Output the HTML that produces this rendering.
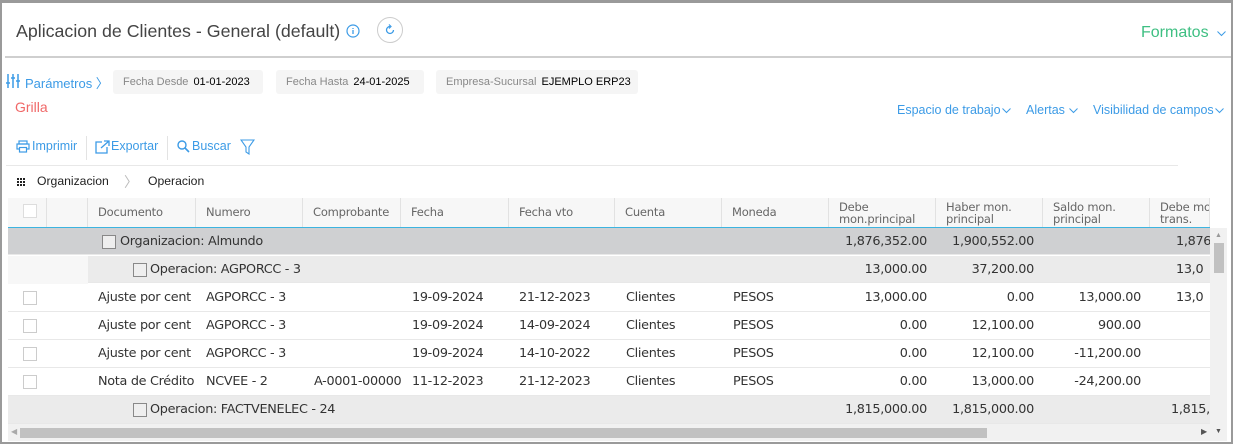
<!DOCTYPE html>
<html><head><meta charset="utf-8"><style>
*{box-sizing:border-box;margin:0;padding:0}
body{width:1235px;height:448px;background:#fff;font-family:"Liberation Sans",sans-serif;position:relative;overflow:hidden}
.a{position:absolute;white-space:nowrap}
.blue{color:#3c9be6}
.frame{position:absolute;left:0;top:0;width:1233px;height:444px;border:2px solid #9a9a9a;border-top-width:3px}
.pill{position:absolute;top:70px;height:24px;background:#f5f5f5;border-radius:3px;font-size:11px;line-height:24px;padding-left:10px}
.pill span{color:#888;margin-right:5px}
.g{font-family:"DejaVu Sans",sans-serif;font-size:12.8px;color:#333;letter-spacing:-0.3px}
.hd{position:absolute;top:198px;height:30px;background:#f7f7f7;border-right:1px solid #e2e2e2;font-family:"DejaVu Sans",sans-serif;font-size:11.5px;color:#666;padding:6px 0 0 10px;line-height:12px;letter-spacing:-0.2px;overflow:hidden;white-space:nowrap}
.row{position:absolute;left:8px;width:1202px;height:28px;border-bottom:1px solid #e8e8e8}
.cb{position:absolute;width:14px;height:14px;border:1px solid #ccc;background:#fff}
.cbg{position:absolute;width:14px;height:14px;border:1px solid #888;background:#eee}
.c{position:absolute;line-height:28px;overflow:hidden;white-space:nowrap}
.r{text-align:right}
.dd{position:absolute;top:103px;font-size:12.5px;color:#3c9be6}
</style></head><body>
<div class="frame"></div>
<div class="a" style="left:16px;top:21px;font-size:17.8px;color:#444">Aplicacion de Clientes - General (default)</div>
<svg class="a" style="left:346px;top:24px" width="14" height="14" viewBox="0 0 14 14"><circle cx="7" cy="7" r="6" fill="none" stroke="#3c9be6" stroke-width="1.2"/><path d="M7 6v4M7 4v1" stroke="#3c9be6" stroke-width="1.3"/></svg>
<div class="a" style="left:377px;top:17px;width:26px;height:26px;border:1px solid #ccc;border-radius:50%"></div>
<svg class="a" style="left:384px;top:24px" width="12" height="12" viewBox="0 0 12 12"><path d="M9.5 6A3.5 3.5 0 1 1 6 2.5" fill="none" stroke="#3c9be6" stroke-width="1.3"/><path d="M5 0.5L7 2.5 5 4.5" fill="none" stroke="#3c9be6" stroke-width="1.2"/></svg>
<div class="a" style="left:1141px;top:24px;font-size:16px;color:#3ebf82">Formatos</div>
<svg class="a" style="left:1217px;top:31px" width="9" height="6" viewBox="0 0 9 6"><path d="M0.5 0.5L4.5 4.5 8.5 0.5" fill="none" stroke="#3c9be6"/></svg>
<div class="a" style="left:5px;top:56px;width:1226px;height:2px;background:#cfcfcf"></div>
<svg class="a" style="left:6px;top:73px" width="14" height="16" viewBox="0 0 14 16"><path d="M2 1v14M7 1v14M12 1v14" stroke="#3c9be6" stroke-width="1.5"/><path d="M0 10h4M5 5h4M10 8h4" stroke="#3c9be6" stroke-width="1.5"/></svg>
<div class="a blue" style="left:25px;top:73px;font-size:13px">Parámetros 〉</div>
<div class="pill" style="left:113px;width:150px"><span>Fecha Desde</span>01-01-2023</div>
<div class="pill" style="left:276px;width:148px"><span>Fecha Hasta</span>24-01-2025</div>
<div class="pill" style="left:436px;width:202px"><span>Empresa-Sucursal</span>EJEMPLO ERP23</div>
<div class="a" style="left:15px;top:99px;font-size:14px;color:#f06868">Grilla</div>
<div class="dd" style="left:897px">Espacio de trabajo</div>
<svg class="a" style="left:1002px;top:108px" width="9" height="6" viewBox="0 0 9 6"><path d="M0.5 0.5L4.5 4.5 8.5 0.5" fill="none" stroke="#3c9be6"/></svg>
<div class="dd" style="left:1026px">Alertas</div>
<svg class="a" style="left:1069px;top:108px" width="9" height="6" viewBox="0 0 9 6"><path d="M0.5 0.5L4.5 4.5 8.5 0.5" fill="none" stroke="#3c9be6"/></svg>
<div class="dd" style="left:1093px">Visibilidad de campos</div>
<svg class="a" style="left:1215px;top:108px" width="9" height="6" viewBox="0 0 9 6"><path d="M0.5 0.5L4.5 4.5 8.5 0.5" fill="none" stroke="#3c9be6"/></svg>
<svg class="a" style="left:16px;top:140px" width="14" height="13" viewBox="0 0 14 13"><rect x="3" y="1" width="8" height="3" fill="none" stroke="#3c9be6" stroke-width="1.2"/><rect x="1" y="4" width="12" height="5" fill="none" stroke="#3c9be6" stroke-width="1.2"/><rect x="3.5" y="7.5" width="7" height="4.5" fill="#fff" stroke="#3c9be6" stroke-width="1.2"/></svg>
<div class="a blue" style="left:32px;top:139px;font-size:12.5px">Imprimir</div>
<div class="a" style="left:86px;top:136px;width:1px;height:24px;background:#e3e3e3"></div>
<svg class="a" style="left:95px;top:140px" width="15" height="14" viewBox="0 0 15 14"><path d="M7 2H1v11h11V7" fill="none" stroke="#3c9be6" stroke-width="1.3"/><path d="M6 8L14 1M9 1h5v5" fill="none" stroke="#3c9be6" stroke-width="1.3"/></svg>
<div class="a blue" style="left:111px;top:139px;font-size:12.5px">Exportar</div>
<div class="a" style="left:167px;top:136px;width:1px;height:24px;background:#e3e3e3"></div>
<svg class="a" style="left:177px;top:140px" width="13" height="13" viewBox="0 0 13 13"><circle cx="5" cy="5" r="4" fill="none" stroke="#3c9be6" stroke-width="1.4"/><path d="M8 8l4 4" stroke="#3c9be6" stroke-width="1.6"/></svg>
<div class="a blue" style="left:192px;top:139px;font-size:12.5px">Buscar</div>
<svg class="a" style="left:240px;top:139px" width="15" height="16" viewBox="0 0 15 16"><path d="M1 1h13L9 8v7l-3-2V8z" fill="none" stroke="#3c9be6" stroke-width="1.1"/></svg>
<div class="a" style="left:6px;top:165px;width:1172px;height:1px;background:#e8e8e8"></div>
<svg class="a" style="left:17px;top:178px" width="8" height="8" viewBox="0 0 8 8" fill="#222"><rect x="0" y="0" width="2" height="2"/><rect x="3" y="0" width="2" height="2"/><rect x="6" y="0" width="2" height="2"/><rect x="0" y="3" width="2" height="2"/><rect x="3" y="3" width="2" height="2"/><rect x="6" y="3" width="2" height="2"/><rect x="0" y="6" width="2" height="2"/><rect x="3" y="6" width="2" height="2"/><rect x="6" y="6" width="2" height="2"/></svg>
<div class="a" style="left:37px;top:174px;font-size:12.2px;color:#222">Organizacion</div>
<div class="a" style="left:124px;top:172px;font-size:14px;color:#bbb">〉</div>
<div class="a" style="left:148px;top:174px;font-size:12.2px;color:#222">Operacion</div>

<div class="hd" style="left:8px;width:39px"></div>
<div class="cb" style="left:23px;top:204px;border-color:#ddd"></div>
<div class="hd" style="left:47px;width:41px"></div>
<div class="hd" style="left:88px;width:108px;padding-top:8px">Documento</div>
<div class="hd" style="left:196px;width:107px;padding-top:8px">Numero</div>
<div class="hd" style="left:303px;width:98px;padding-top:8px">Comprobante</div>
<div class="hd" style="left:401px;width:108px;padding-top:8px">Fecha</div>
<div class="hd" style="left:509px;width:106px;padding-top:8px">Fecha vto</div>
<div class="hd" style="left:615px;width:107px;padding-top:8px">Cuenta</div>
<div class="hd" style="left:722px;width:107px;padding-top:8px">Moneda</div>
<div class="hd" style="left:829px;width:107px;padding-top:3px">Debe<br>mon.principal</div>
<div class="hd" style="left:936px;width:107px;padding-top:3px">Haber mon.<br>principal</div>
<div class="hd" style="left:1043px;width:107px;padding-top:3px">Saldo mon.<br>principal</div>
<div class="hd" style="left:1150px;width:60px;padding-top:3px">Debe mon.<br>trans.</div>
<div class="a" style="left:8px;top:227px;width:1202px;height:1px;background:#3cb4e0"></div>

<div class="row g" style="top:228px;background:#cfd0d2;height:27px">
<div class="cbg" style="left:94px;top:7px"></div><div class="c" style="left:112px">Organizacion: Almundo</div>
<div class="c r" style="left:821px;width:98px">1,876,352.00</div><div class="c r" style="left:928px;width:98px">1,900,552.00</div><div class="c" style="left:1168px">1,876,</div></div>
<div class="row g" style="top:256px;background:#ebebeb;height:27px">
<div class="a" style="left:0;top:0;width:80px;height:28px;background:#f7f7f7"></div>
<div class="cbg" style="left:125px;top:7px"></div><div class="c" style="left:142px">Operacion: AGPORCC - 3</div>
<div class="c r" style="left:821px;width:98px">13,000.00</div><div class="c r" style="left:928px;width:98px">37,200.00</div><div class="c" style="left:1168px">13,0</div></div>

<div class="row g" style="top:284px"><div class="cb" style="left:15px;top:7px"></div><div class="c" style="left:90px;width:104px">Ajuste por cent</div><div class="c" style="left:198px">AGPORCC - 3</div><div class="c" style="left:404px">19-09-2024</div><div class="c" style="left:511px">21-12-2023</div><div class="c" style="left:618px">Clientes</div><div class="c" style="left:725px">PESOS</div><div class="c r" style="left:821px;width:98px">13,000.00</div><div class="c r" style="left:928px;width:98px">0.00</div><div class="c r" style="left:1035px;width:98px">13,000.00</div><div class="c" style="left:1168px">13,0</div></div>
<div class="row g" style="top:312px"><div class="cb" style="left:15px;top:7px"></div><div class="c" style="left:90px;width:104px">Ajuste por cent</div><div class="c" style="left:198px">AGPORCC - 3</div><div class="c" style="left:404px">19-09-2024</div><div class="c" style="left:511px">14-09-2024</div><div class="c" style="left:618px">Clientes</div><div class="c" style="left:725px">PESOS</div><div class="c r" style="left:821px;width:98px">0.00</div><div class="c r" style="left:928px;width:98px">12,100.00</div><div class="c r" style="left:1035px;width:98px">900.00</div></div>
<div class="row g" style="top:340px"><div class="cb" style="left:15px;top:7px"></div><div class="c" style="left:90px;width:104px">Ajuste por cent</div><div class="c" style="left:198px">AGPORCC - 3</div><div class="c" style="left:404px">19-09-2024</div><div class="c" style="left:511px">14-10-2022</div><div class="c" style="left:618px">Clientes</div><div class="c" style="left:725px">PESOS</div><div class="c r" style="left:821px;width:98px">0.00</div><div class="c r" style="left:928px;width:98px">12,100.00</div><div class="c r" style="left:1035px;width:98px">-11,200.00</div></div>
<div class="row g" style="top:368px"><div class="cb" style="left:15px;top:7px"></div><div class="c" style="left:90px;width:104px">Nota de Crédito</div><div class="c" style="left:198px">NCVEE - 2</div><div class="c" style="left:306px;width:95px">A-0001-00000</div><div class="c" style="left:404px">11-12-2023</div><div class="c" style="left:511px">21-12-2023</div><div class="c" style="left:618px">Clientes</div><div class="c" style="left:725px">PESOS</div><div class="c r" style="left:821px;width:98px">0.00</div><div class="c r" style="left:928px;width:98px">13,000.00</div><div class="c r" style="left:1035px;width:98px">-24,200.00</div></div>
<div class="row g" style="top:396px;background:#ebebeb"><div class="cbg" style="left:125px;top:7px"></div><div class="c" style="left:142px">Operacion: FACTVENELEC - 24</div><div class="c r" style="left:821px;width:98px">1,815,000.00</div><div class="c r" style="left:928px;width:98px">1,815,000.00</div><div class="c" style="left:1163px">1,815,0</div></div>

<div class="a" style="left:1210px;top:228px;width:17px;height:196px;background:#f1f1f1"></div>
<div class="a" style="left:1214px;top:243px;width:10px;height:30px;background:#c1c1c1"></div>
<div class="a" style="left:1215px;top:232px;font-size:7px;color:#999">▲</div>
<div class="a" style="left:8px;top:424px;width:1219px;height:17px;background:#f1f1f1"></div>
<div class="a" style="left:20px;top:428px;width:967px;height:10px;background:#c1c1c1"></div>
<div class="a" style="left:11px;top:427px;font-size:8px;color:#aaa">◀</div>
<div class="a" style="left:1201px;top:427px;font-size:8px;color:#555">▶</div>
<div class="a" style="left:1215px;top:428px;font-size:7px;color:#555">▼</div>
</body></html>
